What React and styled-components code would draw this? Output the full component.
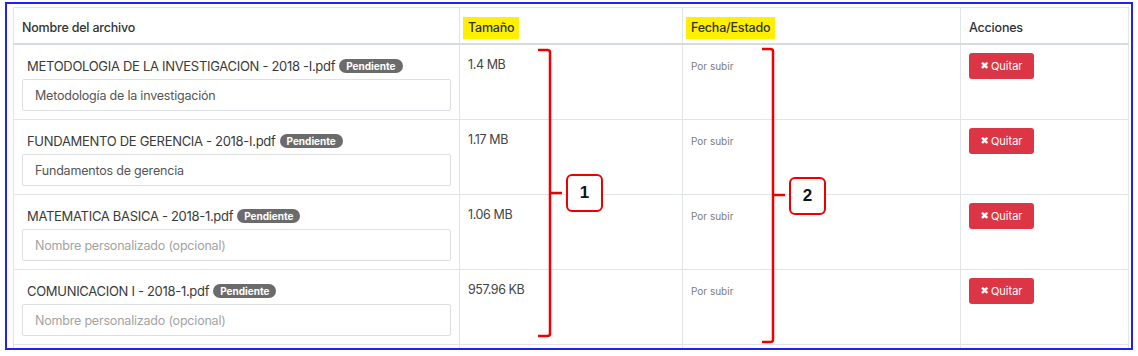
import React from 'react';
import styled, { createGlobalStyle } from "styled-components";

const GlobalStyle = createGlobalStyle`
  body {
    margin: 0;
    background: #ffffff;
    font-family: Inter, "Noto Sans", sans-serif;
  }
`;

const Page = styled.div`
  position: relative;
  width: 1138px;
  height: 356px;
  overflow: hidden;
`;

const Frame = styled.div`
  margin: 2px 0 0 5px;
  border: 2px solid #1f22f2;
  padding: 3px 0 0 6px;
  box-sizing: border-box;
  width: 1128px;
  height: 348px;
  overflow: hidden;
`;

const Table = styled.table`
  border-collapse: collapse;
  width: 1115px;
  table-layout: fixed;
  color: #454545;
`;

const Th = styled.th`
  box-sizing: border-box;
  width: ${p => p.w}px;
  border: 1px solid #e1e4e8;
  border-bottom: 2px solid #d6dbe0;
  padding: 12px 8px 8px;
  text-align: left;
  font-size: 12.5px;
  font-weight: 500;
  line-height: 15px;
  color: #333;
  letter-spacing: -0.2px;
`;

const Mark = styled.span`
  background: #fff000;
  padding: 3px 5px 4px;
  margin-left: -5px;
`;

const Td = styled.td`
  border: 1px solid #e1e4e8;
  padding: 8px;
  vertical-align: top;
  height: 58px;
`;

const FileTitle = styled.div`
  padding: 5px 5px 0;
  font-size: 13px;
  line-height: 16px;
  letter-spacing: -0.3px;
  color: #3a3a3a;
  white-space: nowrap;
`;

const Badge = styled.span`
  display: inline-block;
  margin-left: 4px;
  padding: 0 7px;
  height: 14px;
  line-height: 14px;
  border-radius: 7px;
  background: #6b6b6b;
  color: #fff;
  font-size: 10px;
  font-weight: 700;
  letter-spacing: 0;
  vertical-align: 1px;
`;

const NameInput = styled.input`
  display: block;
  margin-top: 5px;
  width: 100%;
  height: 32px;
  box-sizing: border-box;
  border: 1px solid #dcdfe4;
  border-radius: 2px;
  padding: 0 12px;
  font-family: Inter, "Noto Sans", sans-serif;
  font-size: 12.5px;
  letter-spacing: -0.2px;
  color: #555;
  background: #fff;
  &::placeholder {
    color: #a3a3a3;
  }
`;

const SizeText = styled.div`
  padding-top: 4px;
  font-size: 12.5px;
  line-height: 16px;
  letter-spacing: -0.4px;
  color: #444;
`;

const StatusText = styled.div`
  padding-top: 5px;
  font-size: 10px;
  line-height: 16px;
  color: #7c7c7c;
`;

const RemoveButton = styled.button`
  display: flex;
  align-items: center;
  justify-content: center;
  gap: 2px;
  width: 65px;
  height: 26px;
  border: none;
  border-radius: 3px;
  background: #dc3545;
  color: #fff;
  font-family: Inter, "Noto Sans", sans-serif;
  font-size: 11px;
  padding: 0;
`;

const CrossIcon = styled.span`
  font-family: "DejaVu Sans", sans-serif;
  font-size: 10px;
  line-height: 1;
`;

const Overlay = styled.svg`
  position: absolute;
  left: 0;
  top: 0;
  pointer-events: none;
`;

const Callout = styled.div`
  position: absolute;
  left: ${p => p.x}px;
  top: ${p => p.y}px;
  width: 37px;
  height: 38px;
  box-sizing: border-box;
  border: 2px solid #ee0000;
  border-radius: 6px;
  background: #fff;
  display: flex;
  align-items: center;
  justify-content: center;
  font-family: "Liberation Sans", Arial, sans-serif;
  font-weight: 700;
  font-size: 17px;
  color: #111;
`;

const files = [
  { name: "METODOLOGIA DE LA INVESTIGACION - 2018 -I.pdf", size: "1.4 MB", label: "Metodología de la investigación" },
  { name: "FUNDAMENTO DE GERENCIA - 2018-I.pdf", size: "1.17 MB", label: "Fundamentos de gerencia" },
  { name: "MATEMATICA BASICA - 2018-1.pdf", size: "1.06 MB", label: "" },
  { name: "COMUNICACION I - 2018-1.pdf", size: "957.96 KB", label: "" },
];

const App = () => {
  return (
    <Page>
      <GlobalStyle />
      <Frame>
        <Table>
          <thead>
            <tr>
              <Th w={446}>Nombre del archivo</Th>
              <Th w={223}><Mark>Tamaño</Mark></Th>
              <Th w={278}><Mark>Fecha/Estado</Mark></Th>
              <Th w={168}>Acciones</Th>
            </tr>
          </thead>
          <tbody>
            {files.map(f => (
              <tr key={f.name}>
                <Td>
                  <FileTitle>
                    {f.name}<Badge>Pendiente</Badge>
                  </FileTitle>
                  <NameInput defaultValue={f.label} placeholder="Nombre personalizado (opcional)" />
                </Td>
                <Td><SizeText>{f.size}</SizeText></Td>
                <Td><StatusText>Por subir</StatusText></Td>
                <Td>
                  <RemoveButton><CrossIcon>✖</CrossIcon>Quitar</RemoveButton>
                </Td>
              </tr>
            ))}
            <tr>
              <Td /><Td /><Td /><Td />
            </tr>
          </tbody>
        </Table>
      </Frame>

      <Overlay width="1138" height="356" viewBox="0 0 1138 356">
        <g fill="none" stroke="#ee0000" strokeWidth="2.5" strokeLinejoin="round">
          <path d="M538 50 H547.5 Q550 50 550 52.5 V333.5 Q550 336 547.5 336 H538" />
          <path d="M550 193 H562" />
          <path d="M762 49 H770.5 Q773 49 773 51.5 V339.5 Q773 342 770.5 342 H762" />
          <path d="M773 195 H785" />
        </g>
      </Overlay>
      <Callout x={566} y={174}>1</Callout>
      <Callout x={789} y={177}>2</Callout>
    </Page>
  );
};

export default App;
